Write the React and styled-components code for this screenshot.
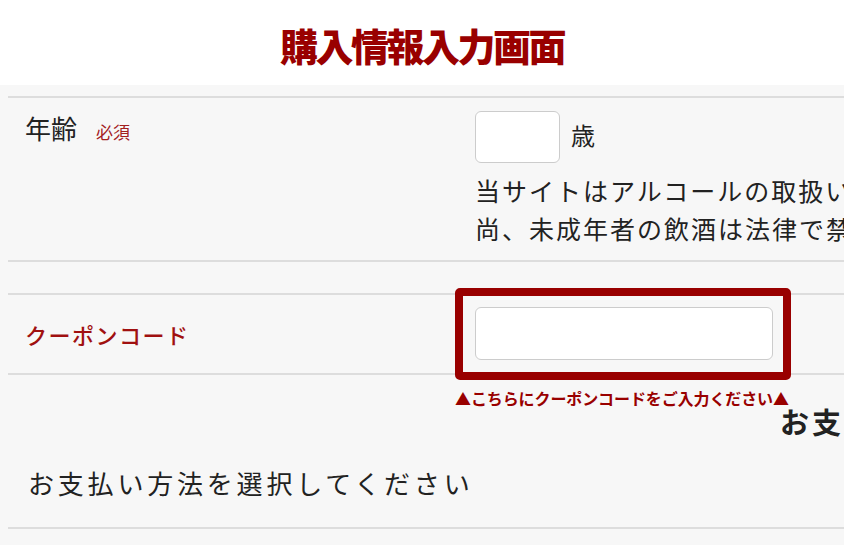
import React from 'react'
import styled, { createGlobalStyle } from 'styled-components'

const GlobalStyle = createGlobalStyle`
  html, body {
    margin: 0;
    padding: 0;
    background: #f7f7f7;
    overflow: hidden;
  }
  body {
    font-family: "Noto Sans CJK JP", "Noto Sans", sans-serif;
    color: #222;
  }
`

const Page = styled.div`
  width: 844px;
  height: 545px;
  overflow: hidden;
`

const Header = styled.header`
  height: 85px;
  background: #fff;
  display: flex; justify-content: center; align-items: center;
  padding-top: 4px;
  box-sizing: border-box;
`

const Title = styled.h1`
  margin: 0;
  font-size: 38px;
  font-weight: 900;
  letter-spacing: -2.5px;
  line-height: 1;
  color: #990000;
`

const Main = styled.main`
  padding: 11px 0 0 8px;
`

const FormTable = styled.div`
  border-top: 2px solid #dddddd;
`

const Row = styled.div`
  display: flex;
  border-bottom: 2px solid #dddddd;
  height: ${(props) => props.height || 'auto'};
  box-sizing: content-box;
`

const LabelCell = styled.div`
  width: 447px;
  flex-shrink: 0;
  padding: ${(props) => props.padding || '0 0 0 17px'};
  box-sizing: border-box;
  display: flex;
  align-items: ${(props) => (props.center ? 'center' : 'baseline')};
`

const Label = styled.span`
  font-size: ${(props) => props.size || '26px'};
  line-height: 1.5;
  color: ${(props) => props.color || '#222'};
  font-weight: ${(props) => props.weight || 400};
  letter-spacing: ${(props) => props.spacing || '0'};
`

const Required = styled.span`
  font-size: 17px;
  color: #a3201f;
  margin-left: 19px;
`

const ValueCell = styled.div`
  padding: ${(props) => props.padding || '0'};
  display: flex;
  flex-direction: column;
`

const AgeLine = styled.div`
  display: flex;
  align-items: center;
`

const AgeInput = styled.input`
  width: 85px;
  height: 52px;
  box-sizing: border-box;
  border: 1px solid #cccccc;
  border-radius: 6px;
  background: #fff;
  margin: 0;
`

const Unit = styled.span`
  font-size: 24px;
  margin-left: 11px;
  margin-top: -6px;
`

const Note = styled.p`
  margin: 9px 0 0;
  font-size: 25px;
  line-height: 37.5px;
  letter-spacing: 2px;
  white-space: nowrap;
`

const CouponFrame = styled.div`
  margin-top: -7px;
  width: 336px;
  height: 92px;
  box-sizing: border-box;
  border: 8px solid #990000;
  border-radius: 5px;
  padding: 11px 10px 12px 12px;
`

const CouponInput = styled.input`
  width: 298px;
  height: 53px;
  box-sizing: border-box;
  border: 1px solid #cccccc;
  border-radius: 6px;
  background: #fff;
  margin: 0;
`

const Hint = styled.p`
  margin: 13px 0 0 447px;
  font-size: 16px;
  font-weight: 700;
  line-height: 20px;
  color: #990000;
  white-space: nowrap;
  letter-spacing: -0.1px;
`

const SectionHeading = styled.h2`
  margin: -5px 0 0 772px;
  font-size: 29px;
  font-weight: 700;
  line-height: 36px;
  letter-spacing: 3px;
  white-space: nowrap;
`

const PaymentRow = styled.div`
  padding: 24px 0 24px 20px;
  border-bottom: 2px solid #dddddd;
  font-size: 26px;
  line-height: 40px;
  letter-spacing: 3.8px;
`

const App = () => {
  return (
    <Page>
      <GlobalStyle />
      <Header>
        <Title>購入情報入力画面</Title>
      </Header>
      <Main>
        <FormTable>
          <Row height="162px">
            <LabelCell padding="10px 0 0 17px">
              <Label>年齢</Label>
              <Required>必須</Required>
            </LabelCell>
            <ValueCell padding="13px 0 0 20px">
              <AgeLine>
                <AgeInput type="text" />
                <Unit>歳</Unit>
              </AgeLine>
              <Note>
                当サイトはアルコールの取扱いがございますので、20歳未満の方への販売は致しておりません。
                <br />
                尚、未成年者の飲酒は法律で禁止されています。
              </Note>
            </ValueCell>
          </Row>
          <Row height="31px" />
          <Row height="78px">
            <LabelCell center>
              <Label size="22px" color="#a01010" weight={500} spacing="1.5px">クーポンコード</Label>
            </LabelCell>
            <ValueCell>
              <CouponFrame>
                <CouponInput type="text" />
              </CouponFrame>
            </ValueCell>
          </Row>
        </FormTable>
        <Hint>▲こちらにクーポンコードをご入力ください▲</Hint>
        <SectionHeading>お支払い方法</SectionHeading>
        <PaymentRow>お支払い方法を選択してください</PaymentRow>
      </Main>
    </Page>
  )
}

export default App
